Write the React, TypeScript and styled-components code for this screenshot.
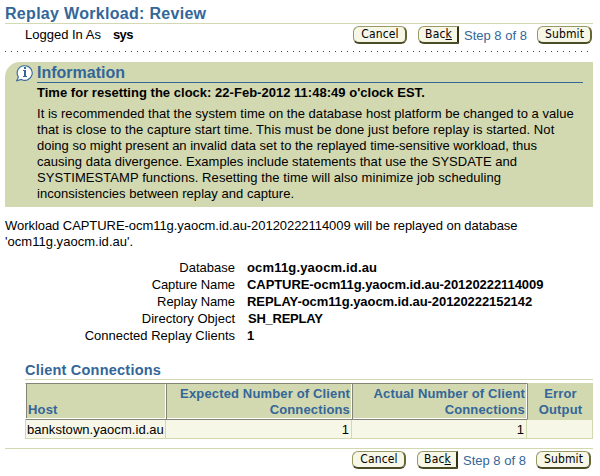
import React from 'react';
import styled, { createGlobalStyle } from 'styled-components';

const Global = createGlobalStyle`
  body { margin: 0; background: #fff; color: #000; font: 13px/16px "Liberation Sans", Arial, sans-serif; }
  * { box-sizing: border-box; }
  p, h1, h2, h3 { margin: 0; }
`;

const Page = styled.main`
  width: 600px;
  height: 476px;
  padding: 4px 7px 0 5px;
  overflow: hidden;
`;

const Title = styled.h1`
  height: 20px;
  border-bottom: 1px solid #d2d8b0;
  color: #336699;
  font-size: 16px;
  line-height: 19px;
  letter-spacing: 0.3px;
`;

const TopBar = styled.div`
  display: flex;
  height: 26px;
  padding: 2px 0 0 20px;
`;

const Login = styled.div`
  display: flex;
  gap: 12px;
  padding-top: 1px;
  white-space: nowrap;
`;

const User = styled.b`
  letter-spacing: -0.6px;
`;

const Actions = styled.div<{ $shift?: number }>`
  display: flex;
  margin-left: auto;
  margin-right: ${(p) => p.$shift ?? 0}px;
  height: 18px;
`;

const Button = styled.button<{ $width: number; $square?: boolean; $gap?: number }>`
  width: ${(p) => p.$width}px;
  height: 18px;
  margin: 0 ${(p) => p.$gap ?? 0}px 0 0;
  padding: 0 0 0 1px;
  border: 1px solid #999966;
  border-right: 2px solid ${(p) => (p.$square ? '#333311' : '#666633')};
  border-bottom: 2px solid #4b4b26;
  border-radius: ${(p) => (p.$square ? '6px 0 0 6px' : '6px')};
  background: #f7f7e7;
  color: #000;
  font: 12px/15px "DejaVu Sans Condensed", "DejaVu Sans", sans-serif;
  font-stretch: condensed;
  letter-spacing: 0.15px;
  white-space: nowrap;
`;

const Step = styled.span`
  width: 73px;
  color: #336699;
  line-height: 19px;
  white-space: nowrap;
`;

const Dots = styled.div`
  height: 1px;
  margin-top: 1px;
  background: repeating-linear-gradient(90deg, #444 0 1px, transparent 1px 6px);
`;

const Info = styled.section`
  height: 145px;
  margin-top: 10px;
  padding: 0 10px 0 11px;
  display: grid;
  grid-template-columns: 21px 1fr;
  background: #d2d8b0;
  border-top-left-radius: 15px;
`;

const InfoIcon = styled.svg`
  display: block;
  width: 17px;
  height: 17px;
  margin-top: 3px;
`;

const InfoTitle = styled.h2`
  height: 21px;
  border-bottom: 1px solid #336699;
  color: #336699;
  font-size: 16px;
  line-height: 21px;
`;

const Strong = styled.p`
  padding-top: 2px;
  font-weight: bold;
  letter-spacing: 0.02px;
  white-space: nowrap;
`;

const Copy = styled.div<{ $top: number }>`
  padding-top: ${(p) => p.$top}px;
`;

const Line = styled.p<{ $track?: number }>`
  height: 16px;
  letter-spacing: ${(p) => p.$track ?? 0}px;
  white-space: nowrap;
`;

const Details = styled.dl`
  display: grid;
  grid-template-columns: 230px 1fr;
  grid-auto-rows: 17px;
  column-gap: 12px;
  margin: 9px 0 0;
  line-height: 17px;
  white-space: nowrap;
`;

const Label = styled.dt<{ $track?: number }>`
  text-align: right;
  letter-spacing: ${(p) => p.$track ?? 0}px;
`;

const Value = styled.dd<{ $track?: number; $indent?: number }>`
  margin: 0;
  padding-left: ${(p) => p.$indent ?? 0}px;
  font-weight: bold;
  letter-spacing: ${(p) => p.$track ?? 0}px;
`;

const Connections = styled.section`
  margin: 18px 0 0 20px;
`;

const TableTitle = styled.h3`
  height: 18px;
  border-bottom: 1px solid #d2d8b0;
  color: #336699;
  font-size: 14.5px;
  line-height: 17px;
  letter-spacing: 0.22px;
`;

const Table = styled.table`
  width: 568px;
  margin-top: 3px;
  table-layout: fixed;
  border-collapse: separate;
  border-spacing: 0;
`;

const Col = styled.col<{ $width?: number }>`
  width: ${(p) => (p.$width ? `${p.$width}px` : 'auto')};
`;

const Head = styled.th<{ $align?: string; $last?: boolean }>`
  height: 37px;
  padding: 0 2px 1px 2px;
  border-left: 1px solid #848477;
  border-top: 1px solid ${(p) => (p.$last ? '#d2d8b0' : '#848477')};
  border-bottom: 1px solid ${(p) => (p.$last ? '#d2d8b0' : '#848477')};
  box-shadow: ${(p) => (p.$last ? 'none' : 'inset -1px -1px #fff')};
  background: #d2d8b0;
  color: #336699;
  letter-spacing: 0.15px;
  text-align: ${(p) => p.$align ?? 'left'};
  vertical-align: bottom;
  white-space: nowrap;
  &:first-child {
    border-left-color: #fff;
    box-shadow: inset -1px -1px #fff, inset 1px 0 #848477;
  }
`;

const Cell = styled.td<{ $num?: boolean }>`
  height: 19px;
  padding: ${(p) => (p.$num ? '1px 2px 0 0' : '1px 0 0 1px')};
  border-right: 1px solid #d2d8b0;
  border-bottom: 1px solid #d2d8b0;
  background: #f7f7e7;
  text-align: ${(p) => (p.$num ? 'right' : 'left')};
  letter-spacing: ${(p) => (p.$num ? 0 : 0.05)}px;
  white-space: nowrap;
  &:first-child { border-left: 1px solid #d2d8b0; }
`;

const Footer = styled.footer`
  display: flex;
  margin-top: 9px;
  padding-top: 2px;
  border-top: 1px solid #d2d8b0;
`;

const details = [
  { label: 'Database', value: 'ocm11g.yaocm.id.au', track: 0.17 },
  { label: 'Capture Name', value: 'CAPTURE-ocm11g.yaocm.id.au-20120222114009', track: -0.07, labelTrack: -0.1 },
  { label: 'Replay Name', value: 'REPLAY-ocm11g.yaocm.id.au-20120222152142', track: -0.07, labelTrack: -0.08 },
  { label: 'Directory Object', value: 'SH_REPLAY', track: -0.25, indent: 1 },
  { label: 'Connected Replay Clients', value: '1' },
];

const advice = [
  { text: 'It is recommended that the system time on the database host platform be changed to a value', track: 0.03 },
  { text: 'that is close to the capture start time. This must be done just before replay is started. Not', track: 0.08 },
  { text: 'doing so might present an invalid data set to the replayed time-sensitive workload, thus', track: 0 },
  { text: 'causing data divergence. Examples include statements that use the SYSDATE and', track: 0.035 },
  { text: 'SYSTIMESTAMP functions. Resetting the time will also minimize job scheduling', track: 0.067 },
  { text: 'inconsistencies between replay and capture.', track: 0.03 },
];

function StepActions({ shift }: { shift?: number }) {
  return (
    <Actions $shift={shift}>
      <Button $width={54} $gap={11}>Cancel</Button>
      <Button $width={41} $gap={5} $square>Bac<u>k</u></Button>
      <Step>Step 8 of 8</Step>
      <Button $width={55}>Submit</Button>
    </Actions>
  );
}

export default function App() {
  return (
    <>
      <Global />
      <Page>
        <Title>Replay Workload: Review</Title>
        <TopBar>
          <Login><span>Logged In As</span><User>sys</User></Login>
          <StepActions shift={1} />
        </TopBar>
        <Dots />
        <Info>
          <InfoIcon viewBox="0 0 17 17">
            <path d="M9 .7a7.3 7.3 0 1 1-3.6 13.7L.7 15.8 2.4 12A7.3 7.3 0 0 1 9 .7Z" fill="#fff" stroke="#336699" strokeWidth="1.1" />
            <path d="M8 2h2v2H8zM7 5h3v6h1v1H7v-1h1V6H7z" fill="#336699" />
          </InfoIcon>
          <div>
            <InfoTitle>Information</InfoTitle>
            <Strong>Time for resetting the clock: 22-Feb-2012 11:48:49 o'clock EST.</Strong>
            <Copy $top={5}>
              {advice.map((l) => <Line key={l.text} $track={l.track}>{l.text}</Line>)}
            </Copy>
          </div>
        </Info>
        <Copy $top={11}>
          <Line $track={-0.054}>Workload CAPTURE-ocm11g.yaocm.id.au-20120222114009 will be replayed on database</Line>
          <Line $track={0.03}>'ocm11g.yaocm.id.au'.</Line>
        </Copy>
        <Details>
          {details.map((d) => (
            <React.Fragment key={d.label}>
              <Label $track={d.labelTrack}>{d.label}</Label>
              <Value $track={d.track} $indent={d.indent}>{d.value}</Value>
            </React.Fragment>
          ))}
        </Details>
        <Connections>
          <TableTitle>Client Connections</TableTitle>
          <Table>
            <colgroup>
              <Col $width={141} />
              <Col $width={186} />
              <Col $width={175} />
              <Col />
            </colgroup>
            <thead>
              <tr>
                <Head>Host</Head>
                <Head $align="right">Expected Number of Client<br />Connections</Head>
                <Head $align="right">Actual Number of Client<br />Connections</Head>
                <Head $align="center" $last>Error<br />Output</Head>
              </tr>
            </thead>
            <tbody>
              <tr><Cell>bankstown.yaocm.id.au</Cell><Cell $num>1</Cell><Cell $num>1</Cell><Cell /></tr>
            </tbody>
          </Table>
        </Connections>
        <Footer><StepActions shift={2} /></Footer>
      </Page>
    </>
  );
}
